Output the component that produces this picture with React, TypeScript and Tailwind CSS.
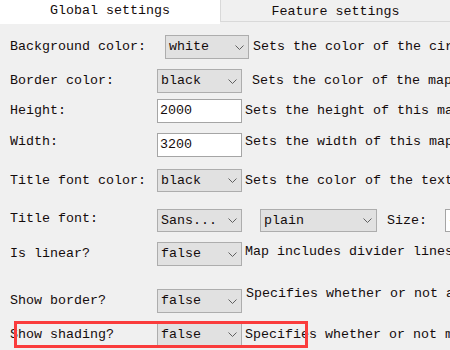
import type { ReactNode } from "react";

const Chevron = () => (
  <svg width="9" height="5" viewBox="0 0 9 5" className="shrink-0">
    <polyline points="0.5,0.5 4.5,4.5 8.5,0.5" fill="none" stroke="#606060" strokeWidth="1" />
  </svg>
);

function Select({ value, width }: { value: string; width: string }) {
  return (
    <div
      className={`flex items-center justify-between h-full shrink-0 bg-[#e1e1e1] border border-[#adadad] pl-[3px] pr-[4px] ${width}`}
    >
      <span>{value}</span>
      <Chevron />
    </div>
  );
}

function TextInput({ value, width }: { value: string; width: string }) {
  return (
    <div className={`flex items-center h-full shrink-0 bg-white border border-[#a5a5a5] pl-[2px] ${width}`}>
      {value}
    </div>
  );
}

function Row({
  className,
  label,
  labelClass = "",
  labelWidth = "w-[157px]",
  children,
}: {
  className: string;
  label: string;
  labelClass?: string;
  labelWidth?: string;
  children: ReactNode;
}) {
  return (
    <div className={`relative flex items-center shrink-0 whitespace-nowrap ${className}`}>
      <span className={`shrink-0 pl-[10px] ${labelWidth} ${labelClass}`}>{label}</span>
      {children}
    </div>
  );
}

export default function App() {
  return (
    <div className="w-[450px] h-[350px] overflow-hidden bg-[#f0f0f0] font-['Liberation_Mono',monospace] text-[13.33px] leading-[16px] text-[#140c0c] flex flex-col">
      <div className="flex h-[24px] shrink-0">
        <div className="w-[220px] h-[24px] bg-white flex justify-center pt-[3px]">
          Global settings
        </div>
        <div className="flex-1 h-[22px] border-l border-b border-[#d9d9d9] bg-[#f0f0f0] flex justify-center pt-[4px]">
          Feature settings
        </div>
      </div>

      <Row className="mt-[11px] h-[24px]" label="Background color:" labelWidth="w-[165px]">
        <Select value="white" width="w-[84px]" />
        <span className="ml-[4px]">Sets the color of the circular map background</span>
      </Row>

      <Row className="mt-[10px] h-[24px]" label="Border color:">
        <Select value="black" width="w-[85px]" />
        <span className="ml-[10px]">Sets the color of the map border</span>
      </Row>

      <Row className="mt-[6px] h-[24px]" label="Height:">
        <TextInput value="2000" width="w-[85px]" />
        <span className="ml-[3px]">Sets the height of this map in pixels</span>
      </Row>

      <Row className="mt-[10px] h-[24px]" label="Width:" labelClass="mb-[6px]">
        <TextInput value="3200" width="w-[85px]" />
        <span className="ml-[3px] mb-[6px]">Sets the width of this map in pixels</span>
      </Row>

      <Row className="mt-[12px] h-[23px]" label="Title font color:">
        <Select value="black" width="w-[85px]" />
        <span className="ml-[3px]">Sets the color of the text in the title</span>
      </Row>

      <Row className="mt-[17px] h-[23px]" label="Title font:" labelClass="mb-[3px]">
        <Select value="Sans..." width="w-[85px]" />
        <div className="ml-[18px] h-full">
          <Select value="plain" width="w-[117px]" />
        </div>
        <span className="ml-[10px]">Size:</span>
        <div className="ml-[18px] h-full">
          <TextInput value="-14" width="w-[40px]" />
        </div>
      </Row>

      <Row className="mt-[10px] h-[24px]" label="Is linear?">
        <Select value="false" width="w-[85px]" />
        <span className="ml-[3px] mb-[4px]">Map includes divider lines between features</span>
      </Row>

      <Row className="mt-[23px] h-[24px]" label="Show border?">
        <Select value="false" width="w-[85px]" />
        <span className="ml-[4px] mb-[14px]">Specifies whether or not a border is drawn</span>
      </Row>

      <Row className="mt-[10px] h-[23px]" label="Show shading?">
        <Select value="false" width="w-[85px]" />
        <span className="ml-[3px]">Specifies whether or not map shading is drawn</span>
        <div className="absolute left-[14px] top-[-2px] w-[294px] h-[27px] border-[3px] border-[#fa3c3c] pointer-events-none" />
      </Row>
    </div>
  );
}
